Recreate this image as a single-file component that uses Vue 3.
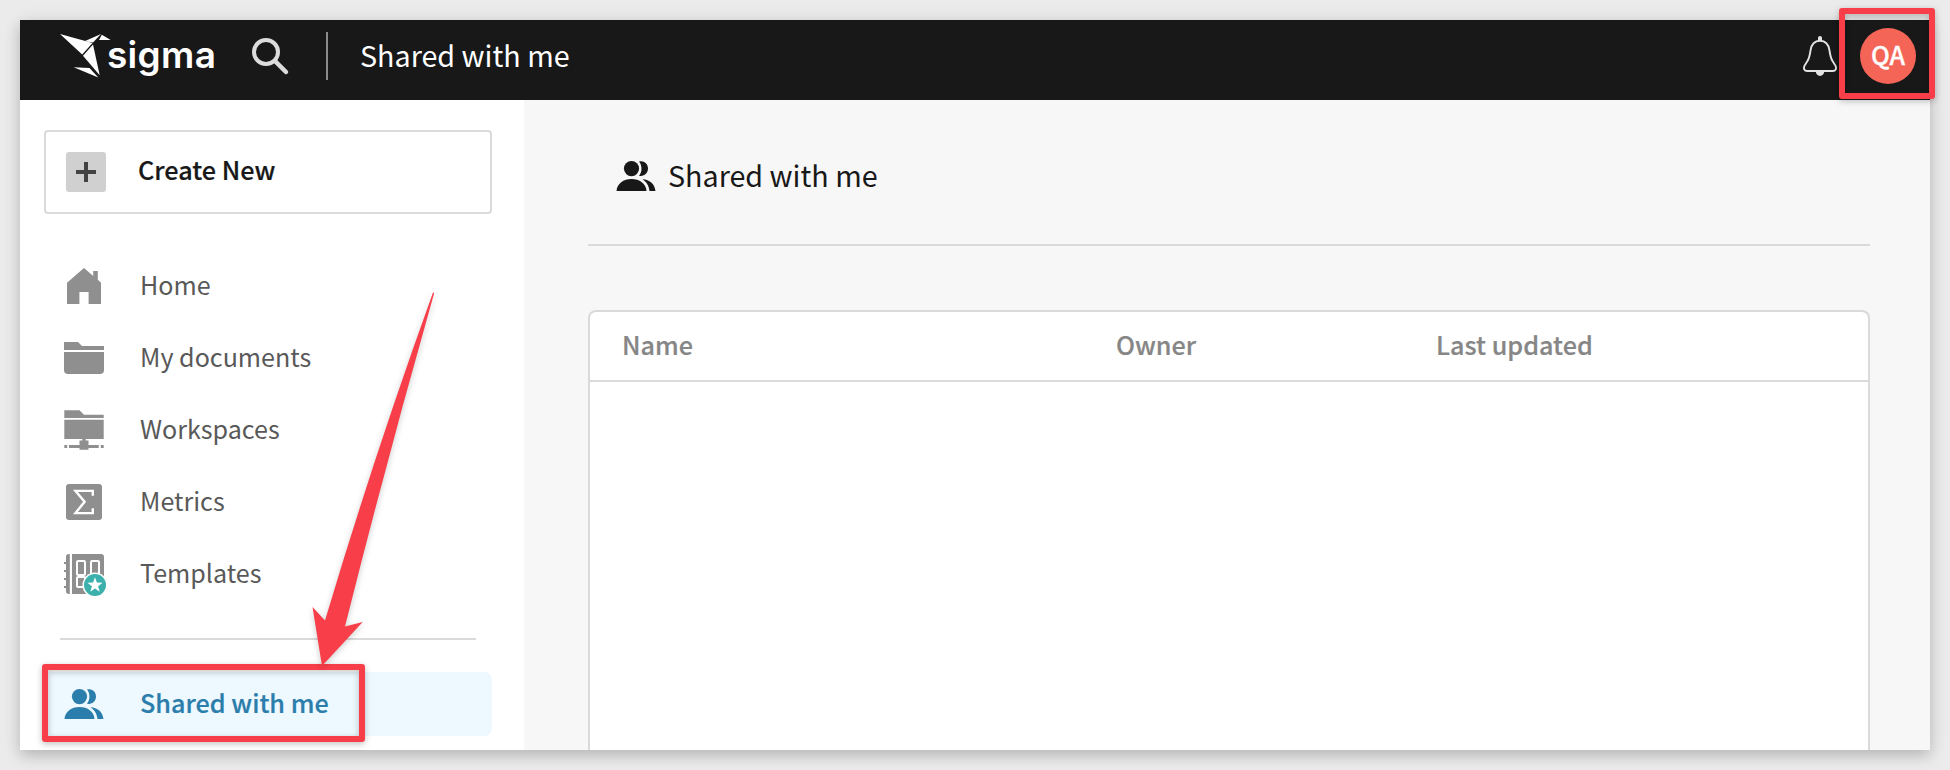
<script setup>
const nav = [
  { id: 'home', label: 'Home' },
  { id: 'docs', label: 'My documents' },
  { id: 'work', label: 'Workspaces' },
  { id: 'metrics', label: 'Metrics' },
  { id: 'templates', label: 'Templates' },
]
const columns = ['Name', 'Owner', 'Last updated']
</script>

<template>
  <div class="page">
    <div class="app">
      <header class="topbar">
        <svg class="bird" viewBox="0 0 52 46" width="52" height="46" fill="#fff">
          <path d="M0 0 32.500 8.900 22.200 20.500Z" />
          <path d="M24.500 7.200 41 0 33 8.500Z" />
          <path d="M41.800 .8 50.700 5.900 39 5.900Z" />
          <path d="M33 10.500 39.700 41.300 23 21.700Z" />
          <path d="M13.700 33.200 29.500 34 38.300 43.500Z" />
        </svg>
        <span class="brand">sigma</span>
        <svg class="search" viewBox="0 0 38 38" width="38" height="38" fill="none" stroke="#dcdcdc">
          <circle cx="14" cy="14" r="12" stroke-width="4" />
          <path d="M23 23 34 34" stroke-width="4.500" stroke-linecap="round" />
        </svg>
        <span class="rule"></span>
        <span class="crumb">Shared with me</span>
        <svg class="bell" viewBox="0 0 34 40" width="34" height="40">
          <path d="M17 4.800C10.800 4.800 8.200 9.800 7.500 14.500C6.800 19.500 6.200 22.500 4.300 25.300L1.600 29.600C.2 32.300 1.200 35 4.200 35H29.800C32.800 35 33.800 32.300 32.400 29.600L29.700 25.300C27.800 22.500 27.200 19.500 26.500 14.500C25.800 9.800 23.200 4.800 17 4.800Z" fill="none" stroke="#e2e2e2" stroke-width="1.900" />
          <path d="M15 5V2a2 2 0 0 1 4 0V5ZM12.700 35h8.600a4.300 5 0 0 1-8.600 0Z" fill="#e2e2e2" />
        </svg>
        <span class="avatar">QA</span>
      </header>

      <div class="body">
        <aside class="sidebar">
          <button class="create">
            <span class="plus"><svg viewBox="0 0 20 20" width="20" height="20" fill="#434343"><path d="M8 0h4v8h8v4h-8v8H8v-8H0V8h8z" /></svg></span>
            <span class="create-label">Create New</span>
          </button>
          <nav class="nav">
            <a v-for="item in nav" :key="item.id" class="item">
              <svg class="icon" viewBox="0 0 44 44" width="44" height="44" fill="#8f8f8f">
                <path v-if="item.id === 'home'" d="M20 4 29.200 12V7h4.600v8.800L37 18.700V40H24.600V28H15.400V40H3V18.700Z" />
                <g v-else-if="item.id === 'docs'">
                  <path d="M0 6h14l4 4H40v4H0Z" />
                  <path d="M0 16H40V34a4 4 0 0 1-4 4H4a4 4 0 0 1-4-4Z" />
                </g>
                <g v-else-if="item.id === 'work'">
                  <path d="M.3 2.300H15.500L20 6.800H39.700V10H.3Z" />
                  <path d="M.3 11.700H39.700V31H.3Z" />
                  <path d="M18.300 30.500h3.400V32.500h2.800V37H34.700V40H24.500V41.700H15.500V40H5V37H15.500V32.500h2.800ZM.3 37h2.900v3H.3ZM36.800 37h2.900v3h-2.900Z" />
                </g>
                <g v-else-if="item.id === 'metrics'">
                  <rect x="2" y="4" width="36" height="36" rx="3" />
                  <path d="M28.800 15.700V10.900H11.500L20.600 21.700 11.500 33.100H28.800V28.300" fill="none" stroke="#fff" stroke-width="2.400" />
                </g>
                <g v-else>
                  <path d="M5 2H6V42H5a3 3 0 0 1-3-3V5a3 3 0 0 1 3-3ZM8 2H37a3 3 0 0 1 3 3V42H8Z" />
                  <path d="M0 10h3v2H0ZM0 18h3v2H0ZM0 26h3v2H0ZM0 34h3v2H0Z" />
                  <rect x="5.800" y="2" width="2.200" height="40" fill="#fff" />
                  <g fill="none" stroke="#fff" stroke-width="2">
                    <rect x="13" y="9" width="8" height="14" rx="1" />
                    <rect x="27" y="9" width="8" height="14" rx="1" />
                    <rect x="13" y="25" width="8" height="10" rx="1" />
                  </g>
                  <circle cx="31" cy="33" r="12.500" fill="#fff" />
                  <circle cx="31" cy="33" r="11" fill="#3bb0ad" />
                  <path d="M31 25.200 32.900 30.600 38.600 30.700 34.100 34.200 35.700 39.700 31 36.400 26.300 39.700 27.900 34.200 23.400 30.700 29.100 30.600Z" fill="#fff" />
                </g>
              </svg>
              <span class="label">{{ item.label }}</span>
            </a>
            <hr class="split" />
            <a class="item active">
              <svg class="icon" viewBox="0 0 44 44" width="44" height="44">
                <g transform="translate(0 7)" fill="#2b7dab">
                  <circle cx="15.500" cy="7.600" r="7.600" />
                  <path d="M.500 30C1 22.500 7.500 18 15.500 18S30 22.500 30.500 30Z" />
                  <path d="M23 .6C27.500-.8 32 2.500 32 7.600S27.500 15.900 23 14.700C26.300 10.900 26.300 4.400 23 .6ZM26.500 18.200C33.500 18.500 38.500 22.500 39.500 30H33.500C33 25.500 31 21 26.500 18.200Z" />
                </g>
              </svg>
              <span class="label">Shared with me</span>
            </a>
          </nav>
        </aside>

        <main class="content">
          <div class="heading">
            <svg viewBox="0 0 40 30" width="40" height="30" fill="#181818">
              <circle cx="15.500" cy="7.600" r="7.600" />
              <path d="M.500 30C1 22.500 7.500 18 15.500 18S30 22.500 30.500 30Z" />
              <path d="M23 .6C27.500-.8 32 2.500 32 7.600S27.500 15.900 23 14.700C26.300 10.900 26.300 4.400 23 .6ZM26.500 18.200C33.500 18.500 38.500 22.500 39.500 30H33.500C33 25.500 31 21 26.500 18.200Z" />
            </svg>
            <h1>Shared with me</h1>
          </div>
          <section class="table">
            <div class="thead"><span v-for="c in columns" :key="c">{{ c }}</span></div>
          </section>
        </main>
      </div>
    </div>

    <div class="mark mark-avatar"></div>
    <div class="mark mark-nav"></div>
    <svg class="arrow" viewBox="0 0 140 380" width="140" height="380">
      <path d="M133 2.500Q134.300 2.300 134 3.800Q87 169 45 336.500L62.700 332L22 376L12.500 317L25 330.500Q74 166 133 2.500Z" fill="#f83e49" />
    </svg>
  </div>
</template>

<style>
body { margin: 0; background: #ebebeb; }
</style>

<style scoped>
.page {
  position: relative;
  box-sizing: border-box;
  width: 1950px;
  height: 770px;
  padding: 20px;
  overflow: hidden;
  background: #ebebeb;
  font-family: "Noto Sans CJK SC", "Noto Sans", sans-serif;
}
.app {
  display: flex;
  flex-direction: column;
  width: 1910px;
  height: 730px;
  background: #fff;
  box-shadow: 0 6px 14px rgba(0, 0, 0, 0.2), 0 0 20px rgba(0, 0, 0, 0.05);
}
.topbar {
  display: flex;
  align-items: flex-start;
  height: 80px;
  background: #181818;
  color: #fff;
}
.bird { margin: 14px 0 0 40px; }
.brand {
  width: 112px;
  margin: 11px 0 0 -5px;
  font: 600 37px/48px Inter, sans-serif;
  letter-spacing: 0.3px;
}
.search { margin: 18px 0 0 33px; }
.rule { width: 2px; height: 48px; margin: 12px 0 0 36px; background: #8b8b8b; }
.crumb {
  margin: 13px 0 0 32px;
  font-size: 28.7px;
  line-height: 44px;
  white-space: nowrap;
}
.bell { margin: 16px 0 0 auto; }
.avatar {
  width: 56px;
  height: 56px;
  margin: 8px 14px 0 23px;
  border-radius: 50%;
  background: #f56557;
  font-size: 25px;
  font-weight: 500;
  line-height: 53px;
  text-align: center;
  -webkit-text-stroke: 0.3px;
}
.body { display: flex; flex: 1; min-height: 0; }
.sidebar { box-sizing: border-box; width: 504px; padding: 30px 32px 0 24px; }
.create {
  box-sizing: border-box;
  display: flex;
  align-items: center;
  width: 448px;
  height: 84px;
  padding: 0 20px;
  border: 2px solid #dadada;
  border-radius: 4px;
  background: #fff;
  font-family: inherit;
  color: #181818;
}
.plus {
  display: flex;
  align-items: center;
  justify-content: center;
  width: 40px;
  height: 40px;
  border-radius: 3px;
  background: #d0d0d0;
}
.create-label {
  margin-left: 32px;
  padding-bottom: 6px;
  font-size: 25.2px;
  font-weight: 500;
  line-height: 36px;
  -webkit-text-stroke: 0.2px;
}
.nav { display: flex; flex-direction: column; gap: 8px; margin-top: 40px; }
.item {
  display: flex;
  align-items: center;
  height: 64px;
  padding-left: 20px;
  border-radius: 8px;
  color: #595959;
}
.icon { flex: none; }
.label { margin-left: 32px; padding-bottom: 4px; font-size: 25.1px; line-height: 36px; white-space: nowrap; }
.split { width: 416px; height: 2px; margin: 24px 0 24px 16px; border: 0; background: #dadada; }
.active { background: #edf8ff; color: #2b7dab; font-weight: 500; -webkit-text-stroke: 0.2px; }
.active .label { font-size: 25.2px; }
.content {
  display: flex;
  flex-direction: column;
  flex: 1;
  padding: 0 60px 0 64px;
  background: #f7f7f7;
}
.heading {
  box-sizing: border-box;
  display: flex;
  align-items: center;
  height: 146px;
  padding: 8px 0 0 28px;
  border-bottom: 2px solid #dadada;
  color: #181818;
}
.heading h1 { margin: 0 0 3px 12px; font-size: 28.7px; font-weight: 400; line-height: 44px; }
.table {
  flex: 1;
  margin-top: 64px;
  border: 2px solid #dadada;
  border-bottom: 0;
  border-radius: 8px 8px 0 0;
  background: #fff;
}
.thead {
  display: grid;
  grid-template-columns: 494px 320px 1fr;
  height: 68px;
  padding-left: 32px;
  border-bottom: 2px solid #dadada;
  color: #868686;
  font-size: 25.2px;
  font-weight: 500;
  line-height: 64px;
  -webkit-text-stroke: 0.2px;
}
.mark {
  position: absolute;
  box-sizing: border-box;
  border: 6px solid #f83e49;
  border-radius: 3px;
  filter: drop-shadow(0 2px 3px rgba(0, 0, 0, 0.25));
}
.mark-avatar { left: 1839px; top: 8px; width: 96px; height: 91px; }
.mark-nav { left: 42px; top: 663.500px; width: 323px; height: 78px; }
.arrow {
  position: absolute;
  left: 300px;
  top: 290px;
  filter: drop-shadow(0 2px 3px rgba(0, 0, 0, 0.2));
}
</style>
